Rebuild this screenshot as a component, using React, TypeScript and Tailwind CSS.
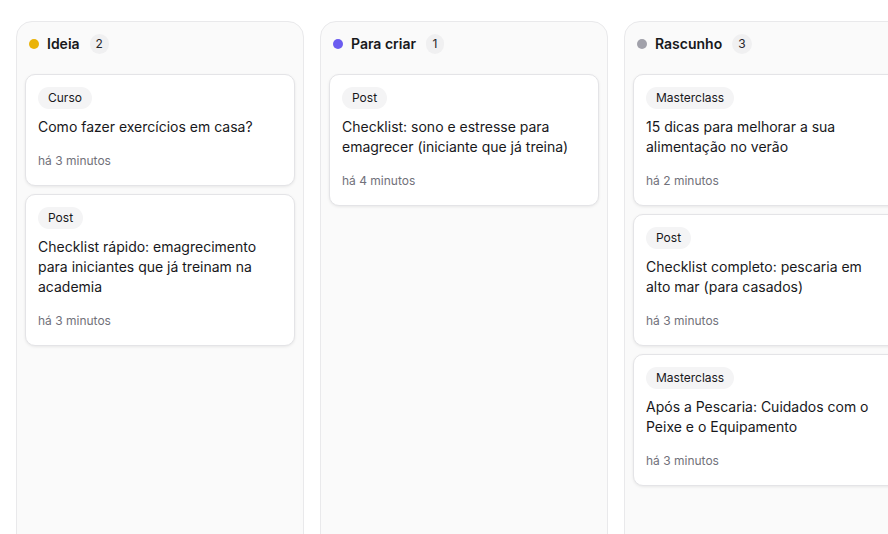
import React from "react";

type Card = { tag: string; title: string; time: string };
type Column = { name: string; dot: string; cards: Card[] };

const columns: Column[] = [
  {
    name: "Ideia",
    dot: "bg-[#eab308]",
    cards: [
      { tag: "Curso", title: "Como fazer exercícios em casa?", time: "há 3 minutos" },
      {
        tag: "Post",
        title: "Checklist rápido: emagrecimento para iniciantes que já treinam na academia",
        time: "há 3 minutos",
      },
    ],
  },
  {
    name: "Para criar",
    dot: "bg-[#6b5cf0]",
    cards: [
      {
        tag: "Post",
        title: "Checklist: sono e estresse para emagrecer (iniciante que já treina)",
        time: "há 4 minutos",
      },
    ],
  },
  {
    name: "Rascunho",
    dot: "bg-[#a1a1aa]",
    cards: [
      { tag: "Masterclass", title: "15 dicas para melhorar a sua alimentação no verão", time: "há 2 minutos" },
      { tag: "Post", title: "Checklist completo: pescaria em alto mar (para casados)", time: "há 3 minutos" },
      {
        tag: "Masterclass",
        title: "Após a Pescaria: Cuidados com o Peixe e o Equipamento",
        time: "há 3 minutos",
      },
    ],
  },
];

function KanbanCard({ card }: { card: Card }) {
  return (
    <div className="bg-white rounded-[10px] border border-[#e4e4e7] shadow-[0_1px_3px_rgba(0,0,0,0.08)] p-3">
      <div className="w-fit rounded-full bg-[#f4f4f5] px-2.5 py-[3px] text-xs leading-4 text-[#18181b]">
        {card.tag}
      </div>
      <p className="mt-2 text-sm leading-5 text-[#18181b]">{card.title}</p>
      <div className="mt-[11px] h-[25px] flex items-center text-xs text-[#71717a]">{card.time}</div>
    </div>
  );
}

export default function App() {
  return (
    <div
      className="h-screen overflow-hidden bg-white pt-[21px] pl-4"
      style={{ fontFamily: "Inter, 'Noto Sans', sans-serif" }}
    >
      <div className="flex gap-4">
        {columns.map((col) => (
          <div
            key={col.name}
            className="w-[288px] shrink-0 h-[560px] rounded-2xl border border-[#e9e9eb] bg-[#fafafa]"
          >
            <div className="flex items-center gap-2 px-3 pt-3 pb-3">
              <span className={`w-2.5 h-2.5 rounded-full ${col.dot}`} />
              <span className="text-sm font-semibold text-[#18181b]">{col.name}</span>
              <span className="ml-0.5 h-5 min-w-[18px] px-1.5 rounded-full bg-[#f0f0f1] flex items-center justify-center text-xs text-[#27272a]">
                {col.cards.length}
              </span>
            </div>
            <div className="flex flex-col gap-2 px-2 pt-2">
              {col.cards.map((c, i) => (
                <KanbanCard key={i} card={c} />
              ))}
            </div>
          </div>
        ))}
      </div>
    </div>
  );
}
